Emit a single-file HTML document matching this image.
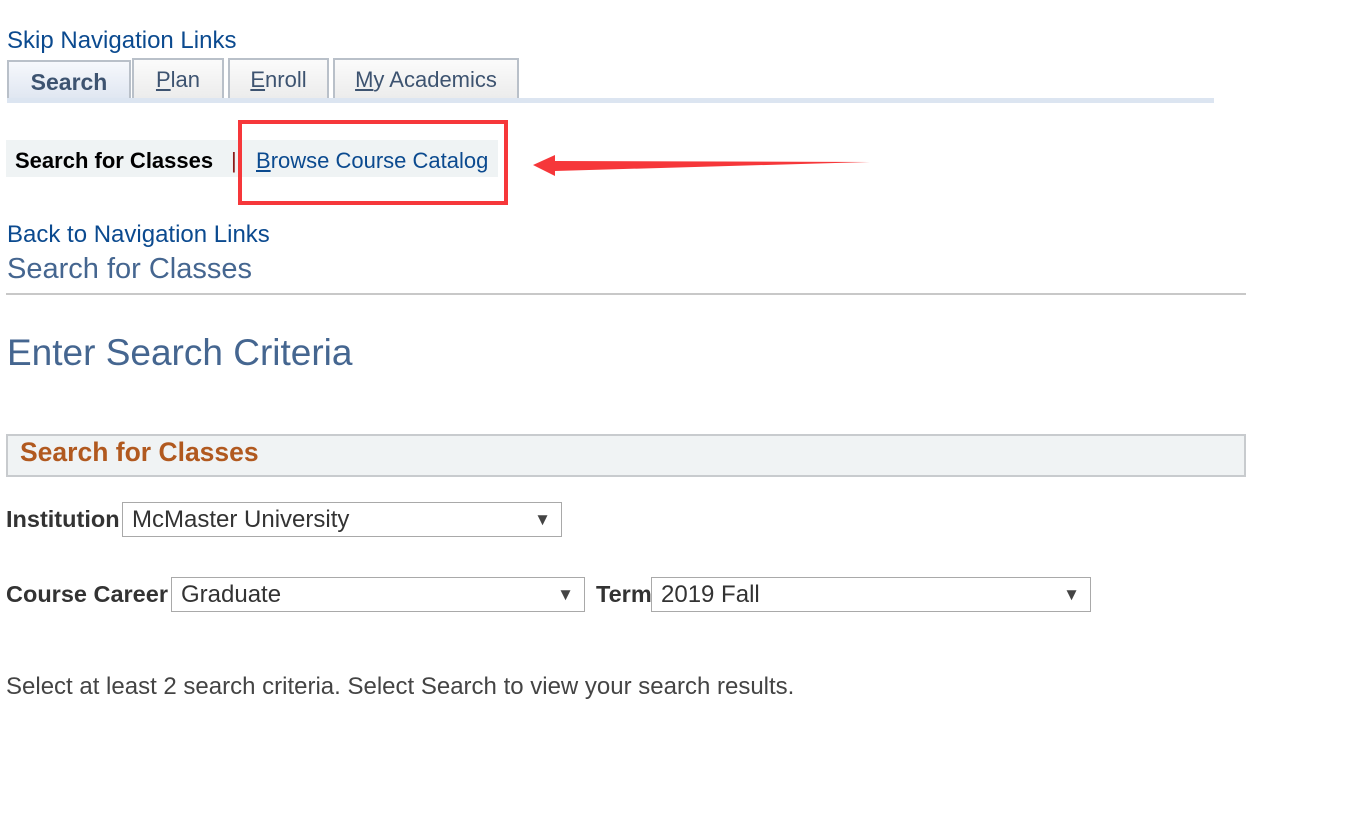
<!DOCTYPE html>
<html><head><meta charset="utf-8"><style>
body{margin:0;width:1360px;height:826px;background:#fff;font-family:"Liberation Sans",Arial,sans-serif;position:relative;overflow:hidden}
.a{position:absolute;white-space:nowrap}
.lnk{color:#0b4a8f;font-size:24px}
.tab{position:absolute;top:58px;height:40px;border:2px solid #b9c0c9;border-bottom:none;background:linear-gradient(#fbfbfb,#ececec);box-sizing:border-box;color:#3d5370;font-size:22px;text-align:center;line-height:40px}
.sel{position:absolute;height:35px;border:1px solid #a9a9a9;box-sizing:border-box;font-size:24px;color:#333;line-height:33px;padding-left:9px}
.sel:after{content:"▼";position:absolute;right:10px;top:0;font-size:17px;color:#444}
.lab{font-weight:bold;font-size:23.5px;color:#333}
</style></head><body>
<div class="a lnk" style="left:7px;top:27px">Skip Navigation Links</div>
<div class="tab" style="left:7px;width:124px;background:linear-gradient(#f6f8fc,#dfe6f1);font-weight:bold;top:60px;font-size:23px">Search</div>
<div class="tab" style="left:132px;width:92px"><u>P</u>lan</div>
<div class="tab" style="left:228px;width:101px"><u>E</u>nroll</div>
<div class="tab" style="left:333px;width:186px"><u>M</u>y Academics</div>
<div class="a" style="left:7px;top:98px;width:1207px;height:5px;background:#dce5f1"></div>
<div class="a" style="left:6px;top:140px;width:492px;height:37px;background:#eff3f4"></div>
<div class="a" style="left:15px;top:148px;font-weight:bold;font-size:22px;color:#000">Search for Classes</div>
<div class="a" style="left:231px;top:148px;font-size:22px;color:#8b1a1a">|</div>
<div class="a lnk" style="left:256px;top:148px;font-size:22px"><u>B</u>rowse Course Catalog</div>
<div class="a" style="left:238px;top:120px;width:263px;height:79px;border:4px solid #f6373a;box-sizing:border-box;width:270px;height:85px"></div>
<svg class="a" style="left:520px;top:140px" width="370" height="50"><polygon points="13,25 35,15 35,21 350,22 35,31 35,36" fill="#f6373a"/></svg>
<div class="a lnk" style="left:7px;top:221px">Back to Navigation Links</div>
<div class="a" style="left:7px;top:253px;font-size:29px;color:#456690">Search for Classes</div>
<div class="a" style="left:6px;top:293px;width:1240px;height:2px;background:#c8c8c8"></div>
<div class="a" style="left:7px;top:332px;font-size:37px;color:#456690">Enter Search Criteria</div>
<div class="a" style="left:6px;top:434px;width:1240px;height:43px;background:#f0f3f4;border:2px solid #c8cbce;box-sizing:border-box"></div>
<div class="a" style="left:20px;top:437px;font-size:26.5px;font-weight:bold;color:#b1591f">Search for Classes</div>
<div class="a lab" style="left:6px;top:506px">Institution</div>
<div class="sel" style="left:122px;top:502px;width:440px">McMaster University</div>
<div class="a lab" style="left:6px;top:581px">Course Career</div>
<div class="sel" style="left:171px;top:577px;width:414px">Graduate</div>
<div class="a lab" style="left:596px;top:581px">Term</div>
<div class="sel" style="left:651px;top:577px;width:440px">2019 Fall</div>
<div class="a" style="left:6px;top:673px;font-size:24px;color:#444">Select at least 2 search criteria. Select Search to view your search results.</div>
</body></html>
